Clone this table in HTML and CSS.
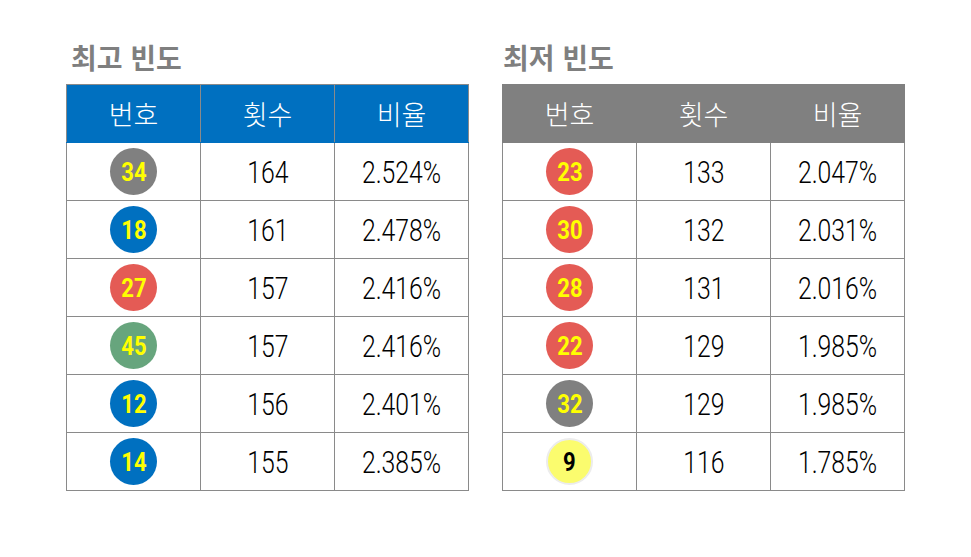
FILE: index.html
```html
<!DOCTYPE html>
<html lang="ko">
<head>
<meta charset="utf-8">
<link rel="stylesheet" href="styles.css">
</head>
<body>
<div class="page">
  <section class="panel">
    <h2 class="title">최고 빈도</h2>
    <table class="freq blue">
      <thead><tr><th>번호</th><th>횟수</th><th>비율</th></tr></thead>
      <tbody>
        <tr><td><span class="ball gray"><span class="n">34</span></span></td><td><span class="num">164</span></td><td><span class="num">2.524%</span></td></tr>
        <tr><td><span class="ball blue"><span class="n">18</span></span></td><td><span class="num">161</span></td><td><span class="num">2.478%</span></td></tr>
        <tr><td><span class="ball red"><span class="n">27</span></span></td><td><span class="num">157</span></td><td><span class="num">2.416%</span></td></tr>
        <tr><td><span class="ball green"><span class="n">45</span></span></td><td><span class="num">157</span></td><td><span class="num">2.416%</span></td></tr>
        <tr><td><span class="ball blue"><span class="n">12</span></span></td><td><span class="num">156</span></td><td><span class="num">2.401%</span></td></tr>
        <tr><td><span class="ball blue"><span class="n">14</span></span></td><td><span class="num">155</span></td><td><span class="num">2.385%</span></td></tr>
      </tbody>
    </table>
  </section>
  <section class="panel">
    <h2 class="title title-tight">최저 빈도</h2>
    <table class="freq grayhead">
      <thead><tr><th>번호</th><th>횟수</th><th>비율</th></tr></thead>
      <tbody>
        <tr><td><span class="ball red"><span class="n">23</span></span></td><td><span class="num">133</span></td><td><span class="num">2.047%</span></td></tr>
        <tr><td><span class="ball red"><span class="n">30</span></span></td><td><span class="num">132</span></td><td><span class="num">2.031%</span></td></tr>
        <tr><td><span class="ball red"><span class="n">28</span></span></td><td><span class="num">131</span></td><td><span class="num">2.016%</span></td></tr>
        <tr><td><span class="ball red"><span class="n">22</span></span></td><td><span class="num">129</span></td><td><span class="num">1.985%</span></td></tr>
        <tr><td><span class="ball gray"><span class="n">32</span></span></td><td><span class="num">129</span></td><td><span class="num">1.985%</span></td></tr>
        <tr><td><span class="ball yellow"><span class="n">9</span></span></td><td><span class="num">116</span></td><td><span class="num">1.785%</span></td></tr>
      </tbody>
    </table>
  </section>
</div>
</body>
</html>
```
FILE: styles.css
```css
html, body {
  margin: 0;
  padding: 0;
  background: #ffffff;
}
body {
  font-family: "Noto Sans CJK KR", "Noto Sans", sans-serif;
  width: 971px;
  height: 557px;
  overflow: hidden;
}
.page {
  display: flex;
  gap: 33px;
  padding: 38px 0 0 66px;
}
.panel {
  display: flex;
  flex-direction: column;
}
.title {
  margin: 0 0 8px 5px;
  height: 38px;
  line-height: 38px;
  font-size: 28px;
  font-weight: 700;
  color: #7f7f7f;
  letter-spacing: 0;
}
.title-tight {
  margin-left: 1px;
}
.freq {
  border-collapse: collapse;
  width: 403px;
  table-layout: fixed;
}
.freq th, .freq td {
  border: 1px solid #8a8a8a;
  height: 57px;
  padding: 0;
  text-align: center;
  vertical-align: middle;
}
.freq th {
  color: #ffffff;
  font-weight: 300;
  font-size: 27px;
  line-height: 1;
}
.freq.blue th {
  background: #0070c0;
  border-color: #0070c0 #8a8a8a;
}
.freq.grayhead th {
  background: #808080;
  border-color: #808080;
}
.freq.blue thead tr th { border-top-color: #8a8a8a; }
.num {
  display: inline-block;
  font-family: "Roboto", "Liberation Sans", sans-serif;
  font-weight: 300;
  font-size: 31px;
  line-height: 1;
  color: #000;
  transform: scaleX(0.8);
  position: relative;
  top: 1px;
}
.ball {
  display: inline-flex;
  align-items: center;
  justify-content: center;
  width: 47px;
  height: 47px;
  border-radius: 50%;
  vertical-align: middle;
  box-sizing: border-box;
}
.ball .n {
  display: inline-block;
  font-family: "Roboto", "Liberation Sans", sans-serif;
  font-weight: 700;
  font-size: 26px;
  line-height: 1;
  color: #ffff00;
  transform: scaleX(0.85);
}
.ball.gray { background: #808080; }
.ball.blue { background: #0070c0; }
.ball.red { background: #e45b55; }
.ball.green { background: #67a57d; }
.ball.yellow {
  background: #fbfc6e;
  border: 2px solid #ececec;
}
.ball.yellow .n { color: #000; }
```
